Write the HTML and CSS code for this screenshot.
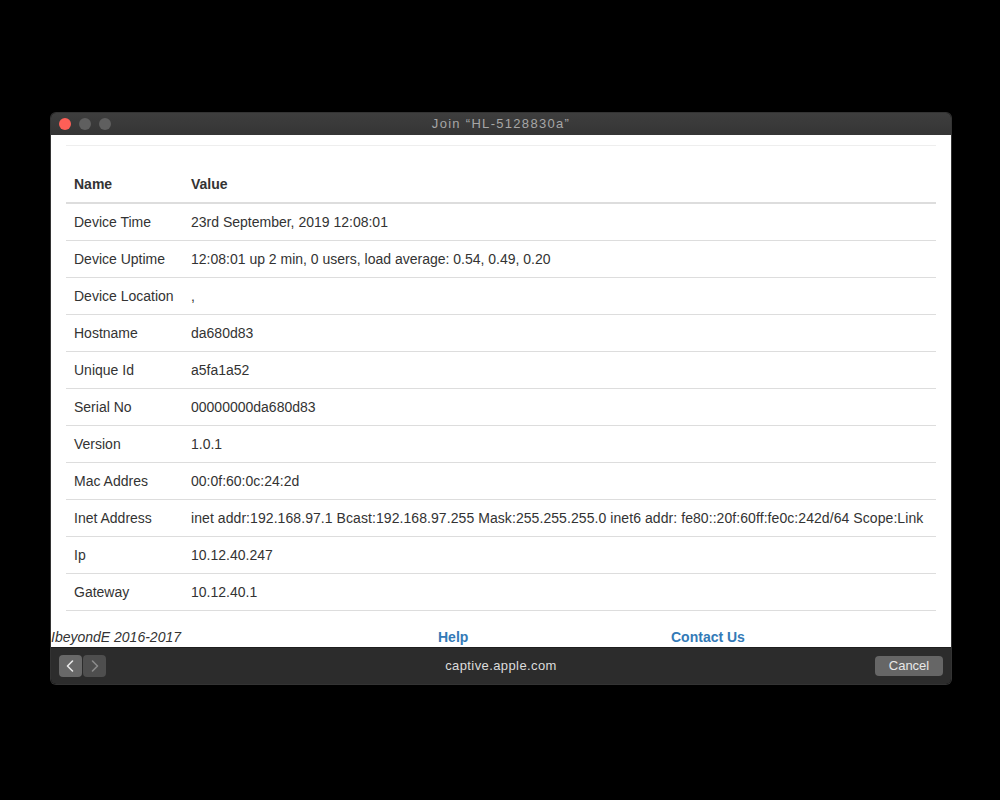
FILE: index.html
```html
<!DOCTYPE html>
<html>
<head>
<meta charset="utf-8">
<link rel="stylesheet" href="styles.css">
</head>
<body>
<div class="window">
  <div class="titlebar">
    <div class="lights">
      <span class="light red"></span>
      <span class="light gray"></span>
      <span class="light gray"></span>
    </div>
    <div class="title">Join “HL-5128830a”</div>
  </div>
  <div class="content">
    <div class="page">
      <hr class="rule">
      <table class="info">
        <thead>
          <tr><th class="c1">Name</th><th>Value</th></tr>
        </thead>
        <tbody>
          <tr><td>Device Time</td><td>23rd September, 2019 12:08:01</td></tr>
          <tr><td>Device Uptime</td><td>12:08:01 up 2 min, 0 users, load average: 0.54, 0.49, 0.20</td></tr>
          <tr><td>Device Location</td><td>,</td></tr>
          <tr><td>Hostname</td><td>da680d83</td></tr>
          <tr><td>Unique Id</td><td>a5fa1a52</td></tr>
          <tr><td>Serial No</td><td>00000000da680d83</td></tr>
          <tr><td>Version</td><td>1.0.1</td></tr>
          <tr><td>Mac Addres</td><td>00:0f:60:0c:24:2d</td></tr>
          <tr><td>Inet Address</td><td class="wide">inet addr:192.168.97.1 Bcast:192.168.97.255 Mask:255.255.255.0 inet6 addr: fe80::20f:60ff:fe0c:242d/64 Scope:Link</td></tr>
          <tr><td>Ip</td><td>10.12.40.247</td></tr>
          <tr><td>Gateway</td><td>10.12.40.1</td></tr>
        </tbody>
      </table>
    </div>
    <div class="footer">
      <span class="copy">IbeyondE 2016-2017</span>
      <a class="link help">Help</a>
      <a class="link contact">Contact Us</a>
    </div>
  </div>
  <div class="bottombar">
    <div class="nav">
      <span class="navbtn back"><svg width="23" height="22" viewBox="0 0 23 22"><path d="M13.5 6 L8.5 11 L13.5 16" fill="none" stroke="#e8e8e8" stroke-width="1.6" stroke-linecap="round" stroke-linejoin="round"/></svg></span>
      <span class="navbtn fwd"><svg width="23" height="22" viewBox="0 0 23 22"><path d="M9.5 6 L14.5 11 L9.5 16" fill="none" stroke="#8a8a8a" stroke-width="1.6" stroke-linecap="round" stroke-linejoin="round"/></svg></span>
    </div>
    <div class="url">captive.apple.com</div>
    <button class="cancel">Cancel</button>
  </div>
</div>
</body>
</html>
```

FILE: styles.css
```css
html, body {
  margin: 0;
  padding: 0;
  background: #000;
}
body {
  width: 1000px;
  height: 800px;
  overflow: hidden;
  font-family: "Liberation Sans", Arial, sans-serif;
}
.window {
  margin: 113px 0 0 51px;
  width: 900px;
  border-radius: 5px;
  overflow: hidden;
  box-shadow: 0 0 0 1px #333;
}
.titlebar {
  height: 22px;
  background: linear-gradient(#3e3e3e, #353535);
  display: flex;
  align-items: center;
  position: relative;
}
.lights {
  display: flex;
  gap: 8px;
  padding-left: 8px;
}
.light {
  width: 12px;
  height: 12px;
  border-radius: 50%;
  display: block;
}
.light.red { background: #fe5f57; }
.light.gray { background: #5f5f5f; }
.title {
  position: absolute;
  left: 0;
  right: 0;
  top: 0;
  line-height: 22px;
  text-align: center;
  color: #a6a6a6;
  font-size: 13px;
  letter-spacing: 1.3px;
}
.content {
  height: 512px;
  background: #fff;
  overflow: hidden;
  color: #333;
  font-size: 14px;
}
.page {
  padding: 10px 15px 0 15px;
}
.rule {
  margin: 0 0 20px;
  border: 0;
  border-top: 1px solid #eee;
  height: 0;
}
.info {
  width: 100%;
  border-collapse: collapse;
  line-height: 20px;
}
.info th, .info td {
  padding: 8px;
  text-align: left;
  vertical-align: top;
}
.info th {
  font-weight: bold;
  border-bottom: 2px solid #ddd;
}
.info th.c1 { width: 101px; }
.info td {
  border-top: 1px solid #ddd;
}
.info td.wide { letter-spacing: 0.07px; }
.info tbody tr:first-child td { border-top: 0; }
.info tbody tr:last-child td { border-bottom: 1px solid #ddd; }
.footer {
  display: flex;
  margin-top: 16px;
  line-height: 20px;
  font-size: 14px;
}
.copy {
  font-style: italic;
  width: 387px;
}
.link {
  color: #337ab7;
  font-weight: bold;
  text-decoration: none;
}
.help { width: 233px; }
.bottombar {
  height: 37px;
  background: #2c2c2c;
  border-top: 1px solid #1e1e1e;
  box-sizing: border-box;
  display: flex;
  align-items: center;
  position: relative;
}
.nav {
  display: flex;
  gap: 1px;
  padding-left: 8px;
}
.navbtn {
  width: 23px;
  height: 22px;
  border-radius: 4px;
  display: block;
}
.navbtn svg { display: block; }
.back { background: #686868; }
.fwd { background: #4e4e4e; }
.url {
  position: absolute;
  left: 0;
  right: 0;
  text-align: center;
  color: #dcdcdc;
  font-size: 13px;
  letter-spacing: 0.4px;
  line-height: 36px;
  pointer-events: none;
}
.cancel {
  margin-left: auto;
  margin-right: 8px;
  width: 68px;
  height: 20px;
  padding: 0;
  border: 0;
  border-radius: 4px;
  background: #666;
  color: #e8e8e8;
  font-family: "Liberation Sans", Arial, sans-serif;
  font-size: 13px;
  line-height: 20px;
}
```
